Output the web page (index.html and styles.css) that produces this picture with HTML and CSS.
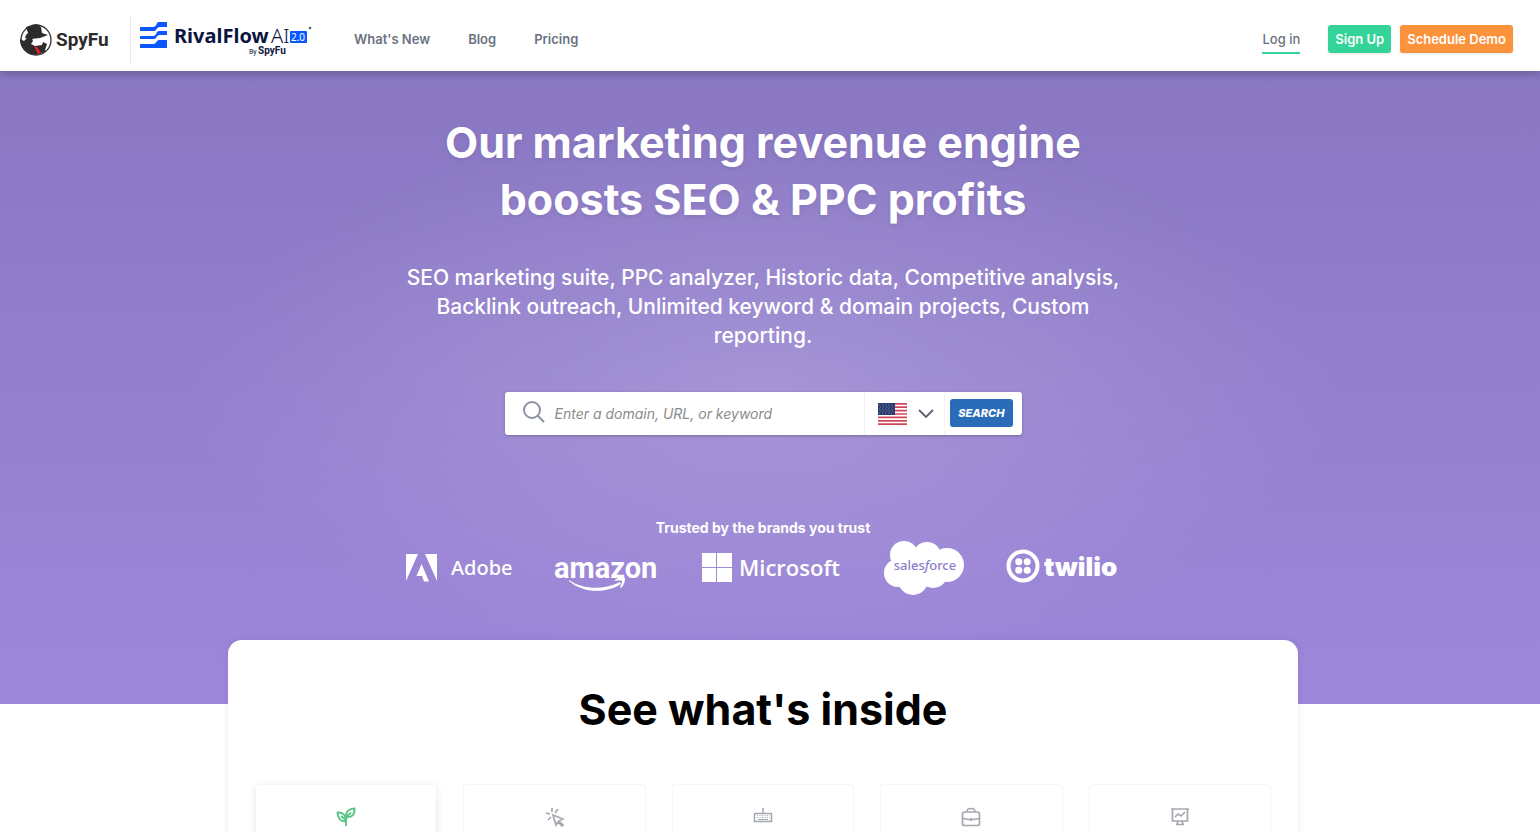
FILE: index.html
```html
<!DOCTYPE html>
<html lang="en">
<head>
  <meta charset="UTF-8" />
  <meta name="viewport" content="width=device-width, initial-scale=1" />
  <title>SpyFu</title>
  <link rel="stylesheet" href="styles.css">
</head>
<body>

  <header class="header">
    <a href="#" class="logo" aria-label="SpyFu">
      <svg width="92" height="34" viewBox="0 0 92 34">
        <circle cx="16" cy="17" r="15" fill="#fff" stroke="#2d2b2c" stroke-width="1.300" />
        <path fill="#2d2b2c" d="M6 4l6-1 4-2 5 3 1 6 6 2-8 3-9 1-6-1 1-3 2-2z" />
        <path fill="#2d2b2c" d="M7 15h5l1 3-2 3 4 2 7-1 1-3 4 2-2 6 1 1c-7 5-17 5-22-1-3-3-4-7-4-11l4 2z" />
        <path fill="#ee1c25" d="M14 23l3 1 4 6-3 1z" />
        <text x="36" y="23" class="spyfu-text">SpyFu</text>
      </svg>
    </a>
    <a href="#" class="logo rival" aria-label="RivalFlow AI by SpyFu">
      <svg width="174" height="40" viewBox="0 0 174 40">
        <g fill="#0b57ff">
          <path d="M0 6h13c4 0 3-5 6-5h8v5h-7c-4 0-3 4-6 4H0z" />
          <path d="M0 15h13c4 0 3-5 6-5h8v4h-7c-4 0-3 4-6 4H0z" />
          <path d="M0 23h13c4 0 3-4 6-4h8v8H0z" />
          <rect x="150" y="10" width="17" height="12" rx="1" />
        </g>
        <text x="34" y="22" class="rival-text">RivalFlow</text>
        <text x="131" y="22" class="rival-light">AI</text>
        <text x="158" y="20" text-anchor="middle" class="rival-version">2.0</text>
        <circle cx="170" cy="7" r="1.300" fill="#555a70" />
        <text x="109" y="33" class="rival-by">By</text>
        <text x="118" y="33" class="rival-spyfu">SpyFu</text>
      </svg>
    </a>
    <nav class="nav">
      <a href="#">What's New</a>
      <a href="#">Blog</a>
      <a href="#">Pricing</a>
    </nav>
    <div class="account">
      <a href="#" class="login">Log in</a>
      <button class="btn btn-green">Sign Up</button>
      <button class="btn btn-orange">Schedule Demo</button>
    </div>
  </header>

  <main>
    <section class="hero">
      <h1>Our marketing revenue engine boosts SEO &amp; PPC profits</h1>
      <p class="subtitle">SEO marketing suite, PPC analyzer, Historic data, Competitive analysis, Backlink outreach, Unlimited keyword &amp; domain projects, Custom reporting.</p>

      <form class="search">
        <svg class="search-icon" width="22" height="22" viewBox="0 0 22 22" fill="none" stroke="#8d93a3" stroke-width="2">
          <circle cx="9" cy="9" r="8" />
          <path d="M14.500 14.500L21 21" />
        </svg>
        <input type="text" placeholder="Enter a domain, URL, or keyword" aria-label="Enter a domain, URL, or keyword">
        <button type="button" class="country" aria-label="Country: United States">
          <svg width="29" height="22" viewBox="0 0 29 22">
            <rect width="29" height="22" fill="#fff" />
            <path stroke="#d0475a" stroke-width="1.700" d="M0 .85h29M0 4.200h29M0 7.600h29M0 11h29M0 14.400h29M0 17.800h29M0 21.150h29" />
            <rect width="17" height="12" fill="#2c3c70" />
            <path stroke="#8c97b8" stroke-width="0.700" stroke-dasharray="1 2" d="M1 2h15M2 4h15M1 6h15M2 8h15M1 10h15" />
          </svg>
          <svg width="16" height="10" viewBox="0 0 16 10" fill="none" stroke="#5b6070" stroke-width="1.800">
            <path d="M1 1l7 7 7-7" />
          </svg>
        </button>
        <button type="button" class="search-btn">SEARCH</button>
      </form>

      <p class="trusted">Trusted by the brands you trust</p>
      <div class="brands">
        <svg width="106" height="56" viewBox="0 0 106 56" fill="#fff">
          <path d="M0 14h12L0 41zM31 14v27L19 14zM15.500 24L23 41.500h-5L16 36h-5.500z" />
          <text x="45" y="35" class="adobe">Adobe</text>
        </svg>
        <svg width="106" height="56" viewBox="0 0 106 56" fill="#fff">
          <text x="0" y="38" class="amazon">amazon</text>
          <path d="M15 40c14 10 36 10 51 2l1 2c-15 10-39 9-52-3z" />
          <path d="M61 40c3-3 7-3 10-2 0 4-1 7-4 10l-1-1c1-2 2-4 2-6-2-1-4-1-7 0z" />
        </svg>
        <svg width="140" height="56" viewBox="0 0 140 56" fill="#fff">
          <path d="M0 13h14v14H0zM15 13h15v14H15zM0 28h14v14H0zM15 28h15v14H15z" />
          <text x="37" y="36" class="microsoft">Microsoft</text>
        </svg>
        <svg width="80" height="56" viewBox="0 0 80 56" fill="#fff">
          <circle cx="20" cy="15" r="14" />
          <circle cx="43" cy="16" r="14" />
          <circle cx="63" cy="25" r="17" />
          <circle cx="14" cy="33" r="14" />
          <circle cx="29" cy="40" r="15" />
          <circle cx="49" cy="33" r="15" />
          <text x="41" y="30" text-anchor="middle" class="salesforce">sales<tspan font-style="italic">f</tspan>orce</text>
        </svg>
        <svg width="114" height="56" viewBox="0 0 114 56" fill="#fff">
          <circle cx="17" cy="26" r="14.500" fill="none" stroke="#fff" stroke-width="4" />
          <circle cx="12.800" cy="21.800" r="3.500" />
          <circle cx="21.200" cy="21.800" r="3.500" />
          <circle cx="12.800" cy="30.200" r="3.500" />
          <circle cx="21.200" cy="30.200" r="3.500" />
          <text x="38" y="36" class="twilio">twilio</text>
        </svg>
      </div>
    </section>

    <section class="inside">
      <h2>See what's inside</h2>
      <div class="tabs">
        <button class="tab active" aria-label="SEO">
          <svg width="20" height="20" viewBox="0 0 20 20" fill="none" stroke="currentColor" stroke-width="1.900">
            <path d="M10 19v-5M10 14c-5 1-8-2-8.500-8.500C7 5 10 8 10 14zM10.500 10C9 5 13 1.500 18.500 1.500 19 7 16 11 10.500 10zM10 14c0-4 2-6 5-8.500M9.500 13L5 9" />
          </svg>
        </button>
        <button class="tab" aria-label="PPC">
          <svg width="20" height="20" viewBox="0 0 20 20" fill="none" stroke="currentColor" stroke-width="1.700">
            <path d="M8 8l10 4-4 2 4 4-1 1-4-4-2 3zM7 1v4M1 6l4 1M13 2l-3 4M3 13l3-3" />
          </svg>
        </button>
        <button class="tab" aria-label="Keywords">
          <svg width="20" height="20" viewBox="0 0 20 20" fill="none" stroke="currentColor" stroke-width="1.500">
            <path d="M10 1v5M1.500 6.500h17v8h-17z" />
            <path stroke-width="1" stroke-dasharray="1 1.500" d="M4 8.500h13M4 10.500h13" />
            <path stroke-width="1" d="M5 12.500h10" />
          </svg>
        </button>
        <button class="tab" aria-label="Business">
          <svg width="20" height="20" viewBox="0 0 20 20" fill="none" stroke="currentColor" stroke-width="1.700">
            <rect x="1.500" y="5" width="17" height="13.500" rx="2" />
            <path d="M6 5c0-3 1-3.500 4-3.500S14 2 14 5M1.500 11.500L8 12.500h4l6.500-1M10 11v3" />
          </svg>
        </button>
        <button class="tab" aria-label="Reporting">
          <svg width="20" height="20" viewBox="0 0 20 20" fill="none" stroke="currentColor" stroke-width="1.700">
            <path d="M1 2h18M2.500 2v12h15V2M5 10l3-3 3 2 4-4M8 14l-1 3.500M12 14l1 3.500M6 17.500h8" />
          </svg>
        </button>
      </div>
    </section>
  </main>

</body>
</html>
```

FILE: styles.css
```css
* {
  box-sizing: border-box;
}

body {
  margin: 0;
  background: #fff;
  font-family: Inter, sans-serif;
  height: calc(100vh - 8px);
  display: flex;
  flex-direction: column;
}

button {
  font-family: inherit;
  border: none;
  cursor: pointer;
}

a {
  text-decoration: none;
}

.header {
  display: flex;
  align-items: center;
  flex: none;
  height: 71px;
  padding: 0 27px 0 20px;
  background: #fff;
  box-shadow: 0 1px 10px rgba(0,0,0,0.3);
  z-index: 1;
}

.logo {
  display: flex;
  align-items: center;
  height: 48px;
  margin-top: 8px;
}

.rival {
  margin-left: 18px;
  padding: 2px 0 0 9px;
  border-left: 1px solid #e6e8ec;
}

.nav {
  display: flex;
  gap: 38px;
  margin: 7px 0 0 40px;
}

.nav a {
  font-size: 13px;
  font-weight: 600;
  color: #6b7280;
}

.account {
  display: flex;
  align-items: center;
  margin: 7px 0 0 auto;
}

.login {
  margin-right: 28px;
  padding: 7px 0 5px;
  border-bottom: 2px solid #34d399;
  font-size: 13px;
  font-weight: 500;
  color: #6b7280;
}

.btn {
  height: 28px;
  padding: 0 7px;
  border-radius: 3px;
  font-size: 13px;
  font-weight: 600;
  color: #fff;
  box-shadow: 0 1px 2px rgba(0,0,0,0.1);
}

.btn-green {
  background: #34d399;
}

.btn-orange {
  margin-left: 9px;
  background: #fb923c;
}

main {
  flex: 1;
  min-height: 0;
  overflow: hidden;
}

.hero {
  display: flex;
  flex-direction: column;
  align-items: center;
  padding: 43px 14px 108px 0;
  background:
    radial-gradient(ellipse 580px 270px at calc(50% - 7px) 51%, rgba(255,255,255,0.17), rgba(255,255,255,0)),
    linear-gradient(#8977c2, #9d87da);
  color: #fff;
  text-align: center;
}

h1 {
  max-width: 720px;
  margin: 0;
  font-size: 43px;
  line-height: 57px;
  font-weight: 700;
  text-shadow: 0 2px 4px rgba(0,0,0,0.08);
}

.subtitle {
  max-width: 740px;
  margin: 35px 0 0;
  font-size: 21px;
  line-height: 29px;
  font-weight: 500;
}

.search {
  display: flex;
  align-items: center;
  width: 517px;
  height: 43px;
  margin-top: 42px;
  padding: 0 9px 0 18px;
  border-radius: 3px;
  background: #fff;
  box-shadow: 0 1px 3px rgba(0,0,0,0.25);
}

.search-icon {
  margin-bottom: 4px;
}

.search input {
  flex: 1;
  min-width: 0;
  padding: 0 0 0 10px;
  border: none;
  outline: none;
  background: none;
  font: italic 14px Inter, sans-serif;
}

.search input::placeholder {
  color: #8b8b8b;
}

.country {
  display: flex;
  align-items: center;
  gap: 11px;
  height: 43px;
  padding: 0 10px 0 13px;
  border-left: 1px solid #f3f3f5;
  border-right: 1px solid #f3f3f5;
  background: none;
}

.search-btn {
  height: 28px;
  margin: 0 0 2px 5px;
  padding: 0 8px;
  border-radius: 3px;
  background: #2b6cb8;
  color: #fff;
  font-size: 11px;
  font-weight: 800;
  font-style: italic;
}

.trusted {
  margin: 83px 0 0;
  font-size: 14px;
  line-height: 20px;
  font-weight: 700;
}

.brands {
  display: flex;
  gap: 42px;
  margin-top: 2px;
}

.spyfu-text {
  font: 700 19px Roboto, sans-serif;
  fill: #2d2b2c;
}

.rival-text {
  font: 700 20px "Noto Sans", sans-serif;
  fill: #0c1440;
}

.rival-light {
  font: 300 20px "Noto Sans", sans-serif;
  fill: #0c1440;
}

.rival-version {
  font: 400 10px "Noto Sans", sans-serif;
  fill: #fff;
}

.rival-by {
  font: 400 7px Roboto, sans-serif;
  fill: #0c1440;
}

.rival-spyfu {
  font: 700 10px Roboto, sans-serif;
  fill: #0c1440;
}

.adobe {
  font: 500 20px "Noto Sans", sans-serif;
}

.amazon {
  font: 700 29px Roboto, sans-serif;
}

.microsoft {
  font: 600 22px "Open Sans", sans-serif;
}

.salesforce {
  font: 500 13px "Noto Sans", sans-serif;
  fill: #8d7cc9;
}

.twilio {
  font: 900 26px Inter, sans-serif;
}

.inside {
  position: relative;
  width: 1070px;
  max-width: 100%;
  margin: -64px auto 0;
  left: -7px;
  padding: 41px 28px 60px;
  border-radius: 14px 14px 0 0;
  background: #fff;
  box-shadow: 0 0 6px rgba(80,60,160,0.12);
}

h2 {
  margin: 0;
  font-size: 43px;
  line-height: 56px;
  font-weight: 700;
  color: #000;
  text-align: center;
}

.tabs {
  display: grid;
  grid-template-columns: repeat(5, 1fr);
  gap: 28px;
  margin-top: 48px;
}

.tab {
  display: flex;
  justify-content: center;
  height: 110px;
  padding: 22px 0 0;
  border-radius: 3px;
  background: #fff;
  color: #a3a8ae;
  box-shadow: 0 0 2px rgba(80,70,120,0.2);
}

.tab.active {
  color: #5cc489;
  box-shadow: 0 1px 7px rgba(80,70,120,0.16);
}
```
